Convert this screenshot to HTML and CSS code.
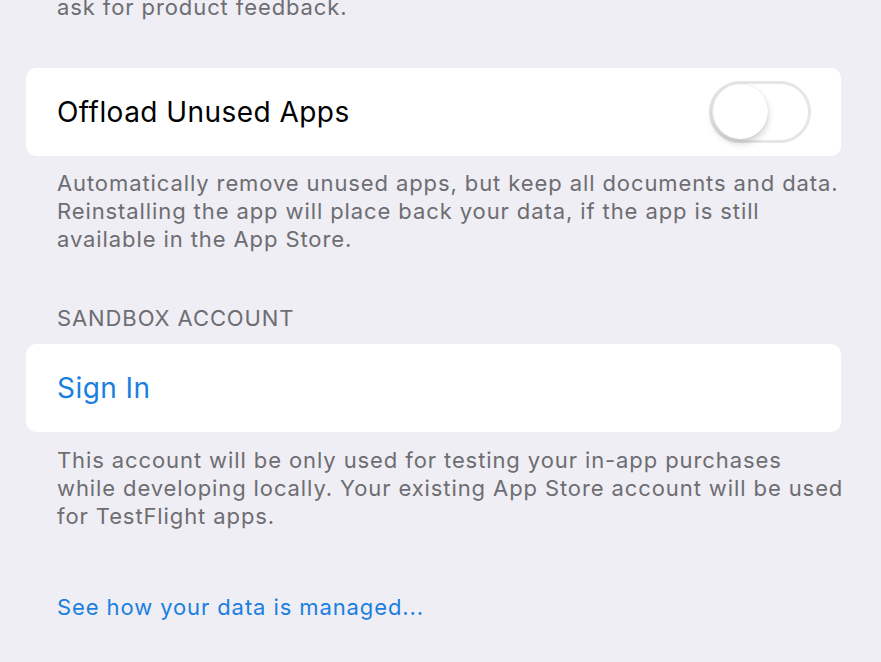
FILE: index.html
```html
<!DOCTYPE html>
<html>
<head>
<meta charset="utf-8">
<link rel="stylesheet" href="styles.css">
</head>
<body>
<div class="page">
  <p class="footer first">ask for product feedback.</p>
  <div class="card">
    <span class="label">Offload Unused Apps</span>
    <span class="toggle"><span class="knob"></span></span>
  </div>
  <p class="footer f2">Automatically remove unused apps, but keep all documents and data. Reinstalling the app will place back your data, if the app is still available in the App Store.</p>
  <p class="header">SANDBOX ACCOUNT</p>
  <div class="card">
    <span class="label link">Sign In</span>
  </div>
  <p class="footer f3">This account will be only used for testing your in-app purchases while developing locally. Your existing App Store account will be used for TestFlight apps.</p>
  <p class="footer more">See how your data is managed...</p>
</div>
</body>
</html>
```
FILE: styles.css
```css
html, body {
  margin: 0;
  padding: 0;
  background: #efeef4;
  overflow: hidden;
}
.page {
  padding: 0 40px 0 26px;
  font-family: "Inter", "Liberation Sans", sans-serif;
  -webkit-font-smoothing: antialiased;
}
p { margin: 0; }
.footer {
  margin-right: -6px;
  padding: 0 0 0 31px;
  font-size: 22px;
  letter-spacing: 0.9px;
  line-height: 28px;
  color: #6d6d72;
}
.first { margin-top: -7px; margin-bottom: 47px; }
.f2 { margin-top: 13px; }
.header {
  margin-top: 51px;
  padding-left: 31px;
  font-size: 22px;
  letter-spacing: 0.9px;
  line-height: 28px;
  color: #6d6d72;
}
.card {
  margin-top: 12px;
  height: 88px;
  background: #fff;
  border-radius: 10px;
  display: flex;
  align-items: center;
  justify-content: space-between;
  padding: 0 30px 0 31px;
}
.first + .card { margin-top: 0; }
.label {
  font-size: 28px;
  letter-spacing: 0.45px;
  color: #000;
}
.link { color: #1a7fe0; }
.f3 { margin-top: 14px; }
.more { margin-top: 63px; color: #1a7fe0; }
.toggle {
  position: relative;
  width: 96px;
  height: 56px;
  border: 3px solid #e6e6e8;
  border-radius: 31px;
  background: #fff;
}
.knob {
  position: absolute;
  left: 1px;
  top: 0;
  width: 55px;
  height: 55px;
  border-radius: 50%;
  background: #fff;
  box-shadow: 0 4px 7px rgba(0,0,0,0.2), 0 0 1px rgba(0,0,0,0.15);
}
```
